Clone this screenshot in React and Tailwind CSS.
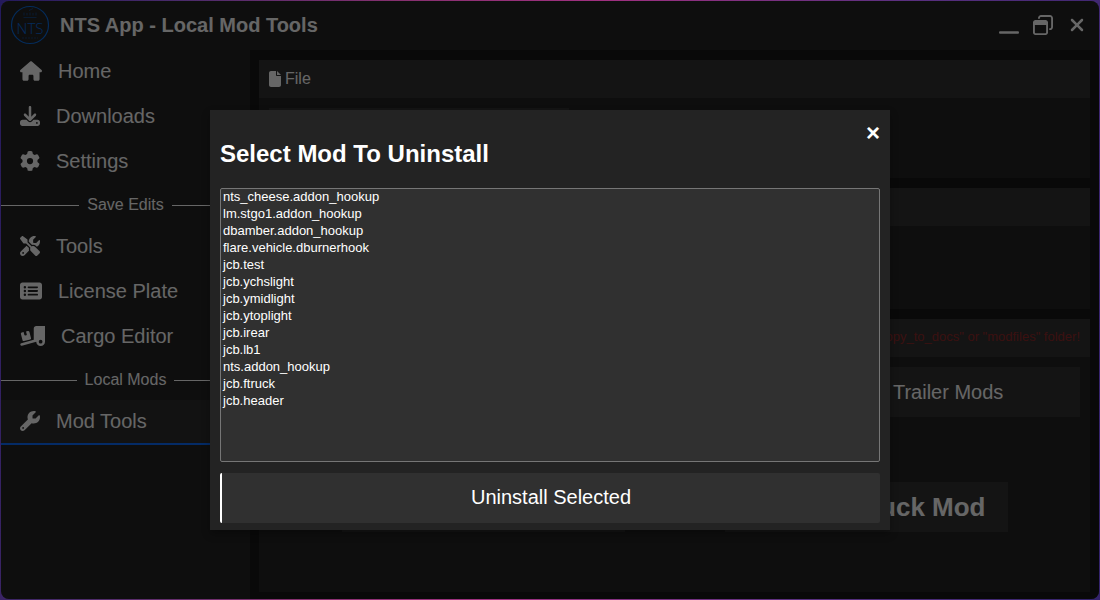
import React, { useState } from "react";
import {
  FaHouse,
  FaDownload,
  FaGear,
  FaScrewdriverWrench,
  FaRectangleList,
  FaTruckRampBox,
  FaWrench,
  FaFile,
  FaWindowMinimize,
  FaRegWindowRestore,
  FaXmark,
} from "react-icons/fa6";

const mainLinks = [
  { title: "Home", icon: FaHouse, size: "w-[22px]" },
  { title: "Downloads", icon: FaDownload, size: "w-5" },
  { title: "Settings", icon: FaGear, size: "w-5" },
];

const saveLinks = [
  { title: "Tools", icon: FaScrewdriverWrench, size: "w-5" },
  { title: "License Plate", icon: FaRectangleList, size: "w-[22px]" },
  { title: "Cargo Editor", icon: FaTruckRampBox, size: "w-[25px]" },
];

const modLinks = [{ title: "Mod Tools", icon: FaWrench, size: "w-5", active: true }];

const mods = [
  "nts_cheese.addon_hookup",
  "lm.stgo1.addon_hookup",
  "dbamber.addon_hookup",
  "flare.vehicle.dburnerhook",
  "jcb.test",
  "jcb.ychslight",
  "jcb.ymidlight",
  "jcb.ytoplight",
  "jcb.irear",
  "jcb.lb1",
  "nts.addon_hookup",
  "jcb.ftruck",
  "jcb.header",
];

export default function App() {
  const [open, setOpen] = useState(true);

  return (
    <div className="h-screen p-px bg-[linear-gradient(100deg,#241a5c,#4a2b6b_15%,#86306f_33%,#a03080_50%,#5a3080_75%,#33236b)] font-['Liberation_Sans',Arial,sans-serif] text-white">
      <div className="relative flex flex-col h-full rounded-lg overflow-hidden bg-[#242424]">
        <TitleBar />
        <div className="flex flex-1 min-h-0">
          <Sidebar />
          <ModTools />
        </div>
        {open && <UninstallDialog onClose={() => setOpen(false)} />}
      </div>
    </div>
  );
}

function TitleBar() {
  return (
    <header className="flex items-center h-[49px] shrink-0 pl-[9px] pr-3 pb-0.5">
      <Logo />
      <h1 className="ml-2.5 text-xl font-bold">NTS App - Local Mod Tools</h1>
      <div className="flex items-center gap-3.5 ml-auto text-xl">
        <button aria-label="Minimize">
          <FaWindowMinimize />
        </button>
        <button aria-label="Restore">
          <FaRegWindowRestore />
        </button>
        <button aria-label="Close">
          <FaXmark />
        </button>
      </div>
    </header>
  );
}

function Logo() {
  return (
    <svg viewBox="0 0 40 40" className="w-10 h-10" fill="none" stroke="#0a6ce0">
      <circle cx="20" cy="20" r="18.5" strokeWidth="1.2" />
      <path
        d="M13.500 12.500h13M14 10.500v-3M17 10.500v-2.500M20 10.500v-3M23 10.500v-2.500M26 10.500v-3M19 5.500l4-2"
        strokeWidth="0.8"
        opacity="0.6"
      />
      <text
        x="20"
        y="29"
        textAnchor="middle"
        fontSize="15"
        fontWeight="300"
        fill="#0a6ce0"
        stroke="none"
        className="font-['Liberation_Sans_Narrow','Open_Sans',sans-serif]"
      >
        NTS
      </text>
      <path d="M12 33h16" strokeWidth="0.8" strokeDasharray="2 1" opacity="0.5" />
    </svg>
  );
}

function Sidebar() {
  return (
    <nav className="w-[249px] shrink-0">
      {mainLinks.map((link) => (
        <NavItem key={link.title} {...link} />
      ))}
      <Divider title="Save Edits" />
      {saveLinks.map((link) => (
        <NavItem key={link.title} {...link} />
      ))}
      <Divider title="Local Mods" />
      {modLinks.map((link) => (
        <NavItem key={link.title} {...link} />
      ))}
    </nav>
  );
}

function NavItem({ title, icon: Icon, size, active }) {
  return (
    <a
      href="#"
      className={`flex items-center gap-4 h-[45px] pl-[19px] pb-0.5 text-xl border-b-2 ${
        active ? "bg-[#2e2e2e] border-[#0a6cff]" : "border-transparent"
      }`}
    >
      <Icon className={`${size} h-5 shrink-0`} />
      {title}
    </a>
  );
}

function Divider({ title }) {
  return (
    <div className="flex items-center gap-2 h-10">
      <span className="flex-1 h-px bg-white" />
      <span>{title}</span>
      <span className="flex-1 h-px bg-white" />
    </div>
  );
}

function ModTools() {
  return (
    <main className="flex flex-col flex-1 gap-2.5 pt-2.5 pb-[7px] px-[9px] bg-[#181818]">
      <section className="h-[118px] bg-[#242424]">
        <header className="flex items-center gap-1 h-[38px] px-2.5 bg-[#333]">
          <FaFile className="w-3 h-4" />
          File
        </header>
        <div className="p-2.5">
          <div className="w-[300px] h-[50px] bg-[#333]" />
        </div>
      </section>

      <section className="h-[121px] bg-[#242424]">
        <header className="h-[38px] bg-[#333]" />
      </section>

      <section className="flex-1 bg-[#242424]">
        <header className="flex items-center justify-end h-[38px] px-2.5 pb-0.5 bg-[#333]">
          <p className="text-[13px] text-[#942a2a]">"copy_to_docs" or "modfiles" folder!</p>
        </header>
        <div className="grid grid-cols-3 gap-2.5 p-2.5">
          <button className="col-start-3 h-[50px] bg-[#333] text-xl">Trailer Mods</button>
        </div>
        <div className="flex justify-center gap-[100px] mt-[55px]">
          <div className="w-[283px] h-[50px] bg-[#333]" />
          <button className="w-[283px] h-[50px] pr-[22px] bg-[#333] text-right text-[26px] font-bold">
            Truck Mod
          </button>
        </div>
      </section>
    </main>
  );
}

function UninstallDialog({ onClose }) {
  const [selected, setSelected] = useState([]);

  const handleChange = (e) => {
    setSelected(Array.from(e.target.selectedOptions, (option) => option.value));
  };

  return (
    <div className="absolute inset-0 flex items-start justify-center pt-[109px] bg-black/60">
      <div
        role="dialog"
        aria-labelledby="uninstall-title"
        className="relative w-[680px] px-2.5 pt-7 pb-[7px] bg-[#232323] shadow-[0_4px_8px_rgba(0,0,0,0.3)]"
      >
        <button
          onClick={onClose}
          aria-label="Close dialog"
          className="absolute top-[7px] right-2.5 text-2xl leading-8 font-bold"
        >
          ×
        </button>
        <h2 id="uninstall-title" className="text-2xl font-bold">
          Select Mod To Uninstall
        </h2>
        <select
          multiple
          size={16}
          aria-labelledby="uninstall-title"
          value={selected}
          onChange={handleChange}
          className="block w-full h-[274px] mt-[18px] border border-[#767676] rounded-xs bg-[#303030] text-[13px] overflow-hidden"
        >
          {mods.map((mod) => (
            <option key={mod} value={mod} className="h-[17px] px-0.5 leading-4">
              {mod}
            </option>
          ))}
        </select>
        <button className="w-full h-[50px] mt-[11px] pb-0.5 border-l-2 border-white rounded-xs bg-[#303030] text-xl">
          Uninstall Selected
        </button>
      </div>
    </div>
  );
}
